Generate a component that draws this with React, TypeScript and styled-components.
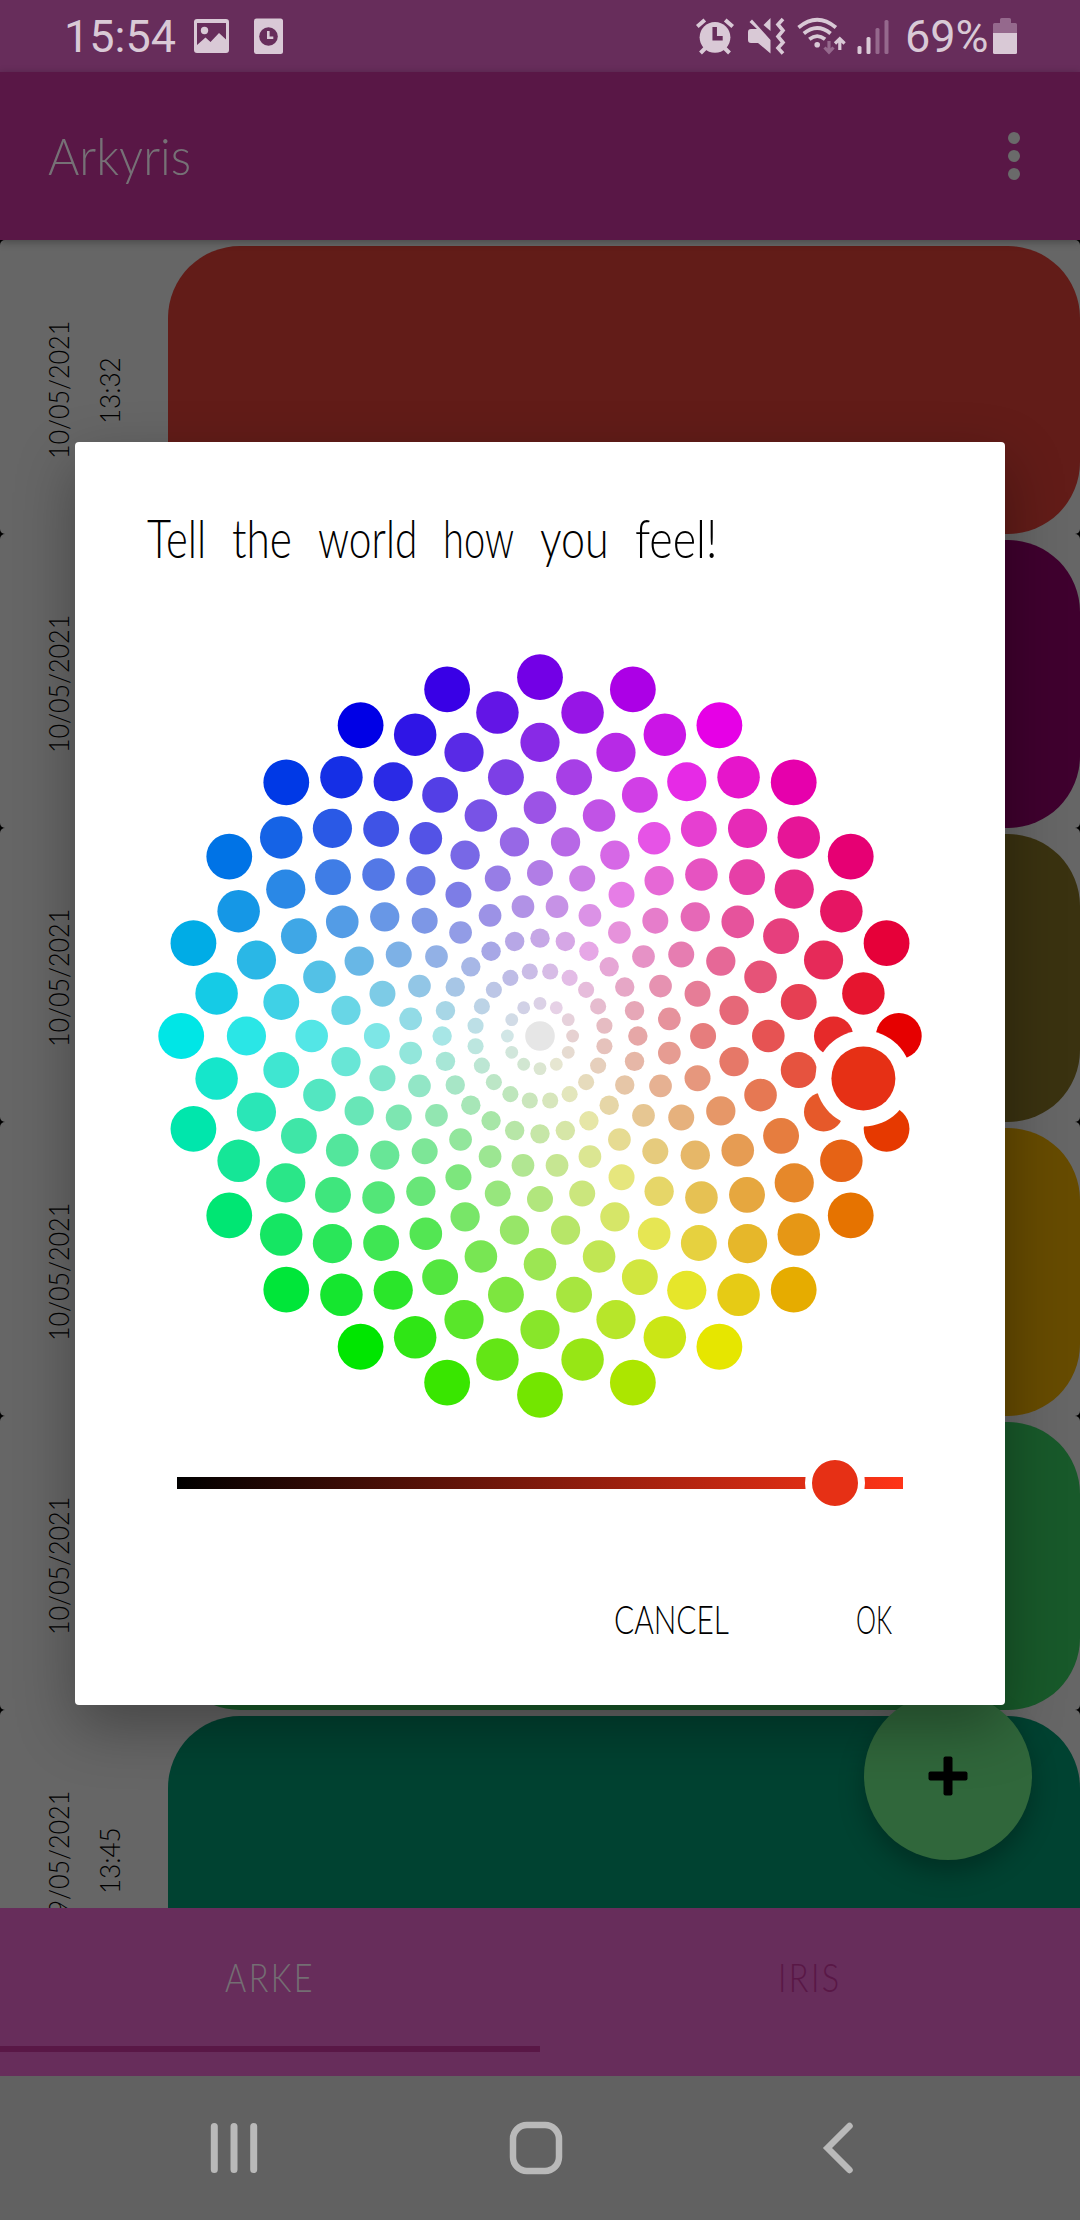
import React, { useLayoutEffect, useRef, useState } from "react";
import styled, { createGlobalStyle } from "styled-components";

const HAND = `Lato, "Open Sans", sans-serif`;
const PLUM = "#672d5b";
const PLUM_DARK = "#591746";
const STATUS_INK = "#d9c9d6";
const STATUS_DIM = "#95698d";

const GlobalStyle = createGlobalStyle`
  *, *::before, *::after { box-sizing: border-box; }
  html, body { margin: 0; padding: 0; background: #000; }
  body { width: 1080px; height: 2220px; overflow: hidden; }
`;

/* ---------- text that is condensed or widened to a given run length ---------- */

const FitBox = styled.span<{ $length: number; $vertical?: boolean }>`
  display: block;
  flex: none;
  white-space: nowrap;
  ${(p) =>
    p.$vertical
      ? `height: ${p.$length}px; writing-mode: vertical-rl; transform: rotate(180deg);`
      : `width: ${p.$length}px;`}
`;

const FitInner = styled.span`
  display: inline-block;
  transform-origin: 0 0;
`;

function Fit({ length, vertical, children }: { length: number; vertical?: boolean; children: string }) {
  const ref = useRef<HTMLSpanElement>(null);
  const [scale, setScale] = useState(1);
  useLayoutEffect(() => {
    const el = ref.current;
    if (!el) return;
    const natural = vertical ? el.offsetHeight : el.offsetWidth;
    if (natural) setScale(length / natural);
  }, [length, vertical, children]);
  return (
    <FitBox $length={length} $vertical={vertical}>
      <FitInner ref={ref} style={{ transform: vertical ? `scaleY(${scale})` : `scaleX(${scale})` }}>
        {children}
      </FitInner>
    </FitBox>
  );
}

/* ---------- screen ---------- */

const Screen = styled.div`
  position: relative;
  width: 1080px;
  height: 2220px;
  display: flex;
  flex-direction: column;
  overflow: hidden;
  background: #000;
  font-family: ${HAND};
`;

const StatusBar = styled.div`
  flex: none;
  height: 72px;
  display: flex;
  align-items: center;
  padding: 0 63px 0 64px;
  background: ${PLUM};
  color: ${STATUS_INK};
  font: 400 45px/72px Roboto, sans-serif;

  svg { display: block; flex: none; }
`;

const Clock = styled.span`
  flex: none;
  width: 126px;
  padding-top: 2px;
`;

const Battery = styled.span`
  flex: none;
  width: 88px;
  margin-left: 13px;
  padding-top: 2px;
  white-space: nowrap;
`;

const Spacer = styled.span`
  flex: 1;
`;

const AppBar = styled.header`
  flex: none;
  position: relative;
  z-index: 1;
  height: 168px;
  display: flex;
  align-items: center;
  justify-content: space-between;
  padding: 0 60px 0 48px;
  background: ${PLUM_DARK};
  box-shadow: 0 2px 8px rgba(0, 0, 0, 0.3);
`;

const AppTitle = styled.h1`
  margin: 0;
  padding-bottom: 3px;
  color: #767176;
  font-weight: 300;
  font-size: 52px;
  line-height: 60px;
`;

const Kebab = styled.div`
  display: flex;
  flex-direction: column;
  gap: 6px;

  i { width: 12px; height: 12px; border-radius: 50%; background: #6a6a6a; }
`;

const List = styled.main`
  flex: none;
  height: 1668px;
  overflow: hidden;
`;

const Entry = styled.article`
  height: 294px;
  display: flex;
  padding-top: 6px;
  border-radius: 5px;
  background: #666;
`;

const Stamps = styled.div`
  flex: none;
  width: 168px;
  display: flex;
  align-items: center;
  padding-left: 38px;
  gap: 11px;
  color: #000;
  font-weight: 300;
  font-size: 28px;
  line-height: 40px;
`;

const Swatch = styled.div<{ $color: string }>`
  flex: 1;
  border-radius: 72px;
  background: ${(p) => p.$color};
`;

const Tabs = styled.nav`
  flex: none;
  height: 168px;
  display: flex;
  background: ${PLUM};
`;

const Tab = styled.div<{ $active?: boolean }>`
  flex: 1;
  height: 144px;
  display: flex;
  align-items: center;
  justify-content: center;
  border-bottom: 6px solid ${(p) => (p.$active ? PLUM_DARK : "transparent")};
  color: ${(p) => (p.$active ? "#746e73" : PLUM_DARK)};
  font-weight: 300;
  font-size: 40px;
  line-height: 48px;
  letter-spacing: 3px;
`;

const NavBar = styled.div`
  flex: none;
  height: 144px;
  display: flex;
  padding-left: 83px;
  background: #616161;
`;

const NavButton = styled.div`
  width: 302px;
  display: flex;
  align-items: center;
  justify-content: center;
`;

const Fab = styled.div`
  position: absolute;
  left: 864px;
  top: 1692px;
  width: 168px;
  height: 168px;
  display: flex;
  align-items: center;
  justify-content: center;
  border-radius: 50%;
  background: #30673b;
  box-shadow: 0 12px 26px rgba(0, 0, 0, 0.28);
`;

/* ---------- dialog ---------- */

const Dialog = styled.section`
  position: absolute;
  left: 75px;
  top: 442px;
  width: 930px;
  height: 1263px;
  display: flex;
  flex-direction: column;
  border-radius: 4px;
  background: #fff;
  color: #000;
  box-shadow: 0 22px 60px rgba(0, 0, 0, 0.32);
`;

const DialogTitle = styled.h2`
  flex: none;
  display: flex;
  gap: 26px;
  height: 204px;
  margin: 0;
  padding: 64px 0 0 72px;
  font-weight: 300;
  font-size: 53px;
  line-height: 64px;
`;

const WheelArea = styled.div`
  flex: none;
  height: 780px;
  display: flex;
  justify-content: center;

  svg { display: block; }
`;

const Track = styled.div`
  position: relative;
  flex: none;
  width: 726px;
  height: 12px;
  margin: 51px 0 0 102px;
  background: linear-gradient(90deg, #000, #ff3417);
`;

const Thumb = styled.div`
  position: absolute;
  top: 50%;
  width: 60px;
  height: 60px;
  margin: -30px 0 0 -30px;
  border: 7.5px solid #fff;
  border-radius: 50%;
  background: #e63015;
`;

const Actions = styled.div`
  flex: none;
  display: flex;
  justify-content: flex-end;
  gap: 127px;
  margin-top: 104px;
  padding-right: 113px;
  font-weight: 300;
  font-size: 40px;
  line-height: 52px;
`;

/* ---------- colour wheel ---------- */

const RINGS = 12;
const STEP = 358.8 / (RINGS - 1);
const C = 390;

function hsv(h: number, s: number, v: number) {
  const f = (n: number) => {
    const k = (n + h / 60) % 6;
    return Math.round(255 * (v - v * s * Math.max(0, Math.min(k, 4 - k, 1))));
  };
  return `rgb(${f(5)},${f(3)},${f(1)})`;
}

const dots = Array.from({ length: RINGS }, (_, i) => {
  const count = i === 0 ? 1 : i === 1 ? 12 : i === 2 ? 20 : 24;
  const size = i === 0 ? 14.8 : 6.4 + (i - 1) * 1.65;
  return Array.from({ length: count }, (_, j) => {
    const a = (360 * j) / count + (i % 2 ? 0 : 180 / count);
    const rad = (a * Math.PI) / 180;
    return {
      x: C + STEP * i * Math.cos(rad),
      y: C + STEP * i * Math.sin(rad),
      r: size,
      fill: hsv(a, i / (RINGS - 1), 0.9),
    };
  });
}).flat();

function Wheel() {
  return (
    <svg width="780" height="780" viewBox="0 0 780 780">
      {dots.map((d, i) => (
        <circle key={i} cx={d.x} cy={d.y} r={d.r} fill={d.fill} />
      ))}
      <circle cx="713.4" cy="432.5" r="48" fill="#fff" />
      <circle cx="713.4" cy="432.5" r="32" fill="#e63015" />
    </svg>
  );
}

/* ---------- status icons ---------- */

const NotificationIcons = () => (
  <svg width="96" height="72" viewBox="190 0 96 72" fill={STATUS_INK}>
    <path
      fillRule="evenodd"
      d="M197 19h29a3 3 0 0 1 3 3v28a3 3 0 0 1-3 3h-29a3 3 0 0 1-3-3V22a3 3 0 0 1 3-3zm0 4v22l8.500-7.500 5 4.500 8.500-9 7 6.500V23z"
    />
    <circle cx="204.500" cy="30.500" r="3.700" />
    <rect x="254" y="18.500" width="29" height="35.500" rx="2.500" />
    <circle cx="268.500" cy="36.500" r="9.300" fill={PLUM} />
    <path d="M268.300 31v6.700h5" fill="none" stroke={STATUS_INK} strokeWidth="2.600" />
  </svg>
);

const SystemIcons = () => (
  <svg width="200" height="72" viewBox="692 0 200 72" fill={STATUS_INK}>
    {/* alarm */}
    <circle cx="715" cy="37.300" r="15.400" />
    <path d="M697.300 26.500l7.500-6.500M732.700 26.500l-7.500-6.500M700.500 53l5-5M729.500 53l-5-5" stroke={STATUS_INK} strokeWidth="4" />
    <path d="M714.700 27v11.300h8" fill="none" stroke={PLUM} strokeWidth="4.500" />
    {/* muted with vibration */}
    <path d="M751 29h6l-7.500-7 2.500-2.500L770.500 40v13.500L758 43h-7a3 3 0 0 1-3-3v-8a3 3 0 0 1 3-3zM763.500 25l7-7v13z" />
    <path d="M783 19l-5 5.500 5 6-5 6 5 6-5 5.500 5 5.500" fill="none" stroke={STATUS_INK} strokeWidth="3.600" />
    {/* wi-fi with traffic arrows */}
    <g fill="none" stroke={STATUS_INK} strokeWidth="3.800">
      <path d="M798.500 27.500q18.700-15.500 37.400 0" />
      <path d="M803.800 33.500q13.300-11 26.800 0" />
      <path d="M809.300 39.300q7.900-6.300 15.800 0" />
    </g>
    <circle cx="817.200" cy="44.800" r="2.800" />
    <path d="M829 41v10.500M824.500 47.500l4.500 4.700 4.500-4.700" fill="none" stroke={STATUS_DIM} strokeWidth="3.200" />
    <path d="M839.800 50V39.500M835 43.500l4.800-4.700 4.800 4.700" fill="none" stroke={STATUS_INK} strokeWidth="3.200" />
    {/* signal */}
    <rect x="857.500" y="46" width="4" height="8" rx="1.500" />
    <rect x="866.500" y="37" width="4" height="17" rx="1.500" />
    <rect x="875.500" y="28" width="4" height="26" rx="1.500" fill={STATUS_DIM} />
    <rect x="884.500" y="20" width="4" height="34" rx="1.500" fill={STATUS_DIM} />
  </svg>
);

const BatteryIcon = () => (
  <svg width="24" height="72" viewBox="993 0 24 72">
    <path d="M1000 23v-3.500a1.500 1.500 0 0 1 1.500-1.500h8a1.500 1.500 0 0 1 1.500 1.500V23h4.500a1.500 1.500 0 0 1 1.500 1.500V33h-24v-8.500a1.500 1.500 0 0 1 1.500-1.500z" fill={STATUS_DIM} />
    <path d="M993 33h24v19.500a1.500 1.500 0 0 1-1.500 1.500h-21a1.500 1.500 0 0 1-1.500-1.500z" fill={STATUS_INK} />
  </svg>
);

/* ---------- data ---------- */

const entries = [
  { date: "10/05/2021", time: "13:32", color: "#621c18" },
  { date: "10/05/2021", color: "#3f002e" },
  { date: "10/05/2021", color: "#3a3210" },
  { date: "10/05/2021", color: "#664b00" },
  { date: "10/05/2021", color: "#18592a" },
  { date: "09/05/2021", time: "13:45", color: "#004231" },
];

const titleWords: [string, number][] = [
  ["Tell", 59],
  ["the", 60],
  ["world", 99],
  ["how", 71],
  ["you", 69],
  ["feel!", 82],
];

export default function App() {
  return (
    <Screen>
      <GlobalStyle />
      <StatusBar>
        <Clock>15:54</Clock>
        <NotificationIcons />
        <Spacer />
        <SystemIcons />
        <Battery>69%</Battery>
        <BatteryIcon />
      </StatusBar>

      <AppBar>
        <AppTitle>
          <Fit length={143}>Arkyris</Fit>
        </AppTitle>
        <Kebab>
          <i />
          <i />
          <i />
        </Kebab>
      </AppBar>

      <List>
        {entries.map((e, i) => (
          <Entry key={i}>
            <Stamps>
              <Fit vertical length={138}>{e.date}</Fit>
              {e.time && <Fit vertical length={67}>{e.time}</Fit>}
            </Stamps>
            <Swatch $color={e.color} />
          </Entry>
        ))}
      </List>

      <Tabs>
        <Tab $active>
          <Fit length={90}>ARKE</Fit>
        </Tab>
        <Tab>
          <Fit length={64}>IRIS</Fit>
        </Tab>
      </Tabs>

      <NavBar>
        <NavButton>
          <svg width="48" height="52" viewBox="0 0 48 52" stroke="#b9b9b9" strokeWidth="7" strokeLinecap="round">
            <path d="M4.300 4.500v43M24 4.500v43M43.700 4.500v43" />
          </svg>
        </NavButton>
        <NavButton>
          <svg width="54" height="54" viewBox="0 0 54 54" fill="none" stroke="#b9b9b9" strokeWidth="6.500">
            <rect x="4" y="4" width="46" height="46" rx="14" />
          </svg>
        </NavButton>
        <NavButton>
          <svg width="32" height="54" viewBox="0 0 32 54" fill="none" stroke="#b9b9b9" strokeWidth="6.500" strokeLinecap="round">
            <path d="M27.500 5L5.500 27l22 22" />
          </svg>
        </NavButton>
      </NavBar>

      <Fab>
        <svg width="40" height="40" viewBox="0 0 40 40">
          <rect x="15.500" y="0.500" width="9" height="39" rx="2" />
          <rect x="0.500" y="15.500" width="39" height="9" rx="2" />
        </svg>
      </Fab>

      <Dialog>
        <DialogTitle>
          {titleWords.map(([word, width]) => (
            <Fit key={word} length={width}>{word}</Fit>
          ))}
        </DialogTitle>
        <WheelArea>
          <Wheel />
        </WheelArea>
        <Track>
          <Thumb style={{ left: `${(657.5 / 726) * 100}%` }} />
        </Track>
        <Actions>
          <Fit length={115}>CANCEL</Fit>
          <Fit length={36}>OK</Fit>
        </Actions>
      </Dialog>
    </Screen>
  );
}
